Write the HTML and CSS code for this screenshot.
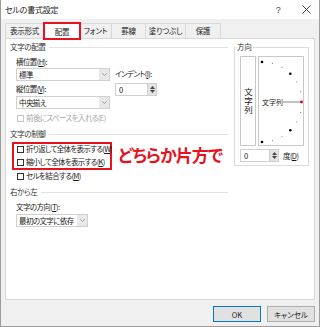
FILE: index.html
```html
<!DOCTYPE html>
<html lang="ja">
<head>
  <meta charset="UTF-8" />
  <title>セルの書式設定</title>
  <link rel="stylesheet" href="styles.css">
</head>
<body>
  <div class="window">
    <div class="titlebar">
      <span class="title">セルの書式設定</span>
      <span class="title-btn help">?</span>
      <span class="title-btn close">
        <svg width="9" height="9" viewBox="0 0 9 9"><path d="M0.5 0.5 L8.5 8.5 M8.5 0.5 L0.5 8.5" stroke="#333" stroke-width="0.9" fill="none"/></svg>
      </span>
    </div>

    <div class="tabs">
      <div class="tab tab-format">表示形式</div>
      <div class="tab active">配置</div>
      <div class="tab tab-font">フォント</div>
      <div class="tab tab-border">罫線</div>
      <div class="tab tab-fill">塗りつぶし</div>
      <div class="tab tab-protect">保護</div>
    </div>

    <div class="panel">
      <div class="left">
        <div class="group-title">文字の配置</div>
        <div class="align-fields">
          <div class="col-main">
            <div class="label">横位置(<u>H</u>):</div>
            <div class="select">
              <span class="select-text">標準</span>
              <span class="select-arrow"><svg width="5" height="3" viewBox="0 0 5 3"><path d="M0.3 0.3 L2.5 2.5 L4.7 0.3" stroke="#8a8a8a" stroke-width="0.8" fill="none"/></svg></span>
            </div>
            <div class="label label-v">縦位置(<u>V</u>):</div>
            <div class="select select-v">
              <span class="select-text">中央揃え</span>
              <span class="select-arrow"><svg width="5" height="3" viewBox="0 0 5 3"><path d="M0.3 0.3 L2.5 2.5 L4.7 0.3" stroke="#8a8a8a" stroke-width="0.8" fill="none"/></svg></span>
            </div>
          </div>
          <div class="col-indent">
            <div class="label label-indent">インデント(<u>I</u>):</div>
            <div class="spinner">
              <span class="spin-value">0</span>
              <span class="spin-btns">
                <svg width="5" height="3" viewBox="0 0 5 3"><path d="M0 3 L2.5 0 L5 3 Z" fill="#444"/></svg>
                <svg width="5" height="3" viewBox="0 0 5 3"><path d="M0 0 L2.5 3 L5 0 Z" fill="#444"/></svg>
              </span>
            </div>
          </div>
        </div>
        <div class="check disabled space-check"><span class="box"></span>前後にスペースを入れる(E)</div>

        <div class="group-title control-title">文字の制御</div>
        <div class="control-row">
          <div class="highlight">
            <div class="check"><span class="box"></span>折り返して全体を表示する(<u>W</u>)</div>
            <div class="check shrink"><span class="box"></span>縮小して全体を表示する(<u>K</u>)</div>
          </div>
          <div class="note">どちらか片方で</div>
        </div>
        <div class="check merge"><span class="box"></span>セルを結合する(<u>M</u>)</div>

        <div class="group-title rtl-title">右から左</div>
        <div class="label label-dir">文字の方向(<u>T</u>):</div>
        <div class="select select-dir">
          <span class="select-text">最初の文字に依存</span>
          <span class="select-arrow"><svg width="5" height="3" viewBox="0 0 5 3"><path d="M0.3 0.3 L2.5 2.5 L4.7 0.3" stroke="#8a8a8a" stroke-width="0.8" fill="none"/></svg></span>
        </div>
      </div>

      <fieldset class="orient">
        <legend>方向</legend>
        <div class="orient-boxes">
          <div class="vert-box"><span class="vert-text">文字列</span></div>
          <div class="dial">
            <svg width="44" height="88" viewBox="0 0 44 88">
              <circle cx="3" cy="5" r="1.3" fill="#000"/>
              <circle cx="13.4" cy="6.4" r="0.6" fill="#888"/>
              <circle cx="23" cy="10.4" r="0.6" fill="#888"/>
              <circle cx="31.3" cy="16.7" r="1.3" fill="#000"/>
              <circle cx="37.6" cy="25" r="0.6" fill="#888"/>
              <circle cx="41.6" cy="34.6" r="0.6" fill="#888"/>
              <circle cx="41.6" cy="55.4" r="0.6" fill="#888"/>
              <circle cx="37.6" cy="65" r="0.6" fill="#888"/>
              <circle cx="31.3" cy="73.3" r="1.3" fill="#000"/>
              <circle cx="23" cy="79.6" r="0.6" fill="#888"/>
              <circle cx="13.4" cy="83.6" r="0.6" fill="#888"/>
              <circle cx="3" cy="85" r="1.3" fill="#000"/>
              <line x1="24" y1="45" x2="42" y2="45" stroke="#555" stroke-width="0.7"/>
              <circle cx="42.5" cy="45" r="1.4" fill="#d0021b"/>
              <text x="3" y="47.5" class="dial-text">文字列</text>
            </svg>
          </div>
        </div>
        <div class="degree-row">
          <div class="spinner spinner-deg">
            <span class="spin-value">0</span>
            <span class="spin-btns">
              <svg width="5" height="3" viewBox="0 0 5 3"><path d="M0 3 L2.5 0 L5 3 Z" fill="#444"/></svg>
              <svg width="5" height="3" viewBox="0 0 5 3"><path d="M0 0 L2.5 3 L5 0 Z" fill="#444"/></svg>
            </span>
          </div>
          <span class="degree-label">度(<u>D</u>)</span>
        </div>
      </fieldset>
    </div>

    <div class="footer">
      <button class="btn primary">OK</button>
      <button class="btn">キャンセル</button>
    </div>
  </div>
</body>
</html>
```

FILE: styles.css
```css
* {
  box-sizing: border-box;
  margin: 0;
  padding: 0;
}
body {
  font-family: "Noto Sans CJK JP", "Noto Sans", sans-serif;
  font-size: 7.5px;
  letter-spacing: -0.6px;
  color: #1a1a1a;
  font-feature-settings: "palt";
  background: #fff;
  white-space: nowrap;
}
u {
  text-decoration: underline;
  text-underline-offset: 1px;
}
.window {
  width: 320px;
  height: 327px;
  background: #f0f0f0;
  border: 1px solid #9c9c9c;
  border-top: none;
  display: flex;
  flex-direction: column;
}
.titlebar {
  height: 19px;
  background: #fff;
  display: flex;
  align-items: center;
  padding-left: 4px;
}
.title {
  flex: 1;
  font-size: 8px;
  letter-spacing: -0.2px;
  color: #222;
}
.title-btn {
  display: flex;
  align-items: center;
  justify-content: center;
  height: 19px;
  color: #444;
}
.help {
  width: 30px;
  font-family: "Liberation Sans", sans-serif;
  font-size: 9px;
}
.close {
  width: 26px;
}

/* tabs */
.tabs {
  display: flex;
  align-items: flex-start;
  height: 15px;
  margin-top: 4px;
  padding-left: 4px;
  position: relative;
  z-index: 1;
}
.tab {
  height: 15px;
  line-height: 14px;
  text-align: center;
  font-size: 7.5px;
  letter-spacing: -0.2px;
  color: #222;
  background: #f0f0f0;
  border: 1px solid #d9d9d9;
  border-bottom: none;
  margin-left: -1px;
}
.tab:first-child {
  margin-left: 0;
}
.tab-format { width: 39px; }
.tab-font { width: 33px; }
.tab-border { width: 35px; }
.tab-fill { width: 41px; }
.tab-protect { width: 36px; }
.tab.active {
  width: 38px;
  height: 18px;
  margin-top: -1px;
  margin-left: -1px;
  margin-right: -1px;
  line-height: 15px;
  background: #fff;
  border: 2px solid #e6121d;
  position: relative;
  z-index: 2;
}

/* main panel */
.panel {
  height: 262px;
  margin: 0 4px;
  background: #fff;
  border: 1px solid #d9d9d9;
  display: flex;
  align-items: flex-start;
  padding: 3px 0 0 4px;
}
.left {
  width: 218px;
}
.group-title {
  display: flex;
  align-items: center;
  height: 10px;
  line-height: 10px;
  letter-spacing: -0.3px;
  color: #333;
}
.group-title::after {
  content: "";
  flex: 1;
  border-top: 1px solid #e3e3e3;
  margin-left: 3px;
}
.label {
  height: 10px;
  line-height: 10px;
}
.align-fields {
  display: flex;
  margin-left: 6px;
  margin-top: 5px;
}
.col-main {
  width: 94px;
}
.col-indent {
  margin-left: 5px;
}
.label-indent {
  margin-top: 12px;
}
.label-v {
  margin-top: 3px;
}
.select {
  display: flex;
  align-items: stretch;
  height: 13px;
  margin-top: 1px;
  border: 1px solid #d0d0d0;
  background: #fff;
}
.select-v {
  margin-top: 2px;
}
.select-text {
  flex: 1;
  padding-left: 2px;
  line-height: 11px;
}
.select-arrow {
  width: 10px;
  flex-shrink: 0;
  display: flex;
  align-items: center;
  justify-content: center;
  background: #e8e8e8;
}
.spinner {
  display: flex;
  height: 13px;
  width: 42px;
  margin-top: 4px;
}
.spin-value {
  flex: 1;
  border: 1px solid #d0d0d0;
  background: #fff;
  padding-left: 3px;
  line-height: 11px;
}
.spin-btns {
  width: 9px;
  display: flex;
  flex-direction: column;
  align-items: center;
  justify-content: space-around;
  background: #e3e3e3;
  border: 1px solid #d0d0d0;
  border-left: none;
  padding: 1px 0;
}

/* checkboxes */
.check {
  display: flex;
  align-items: center;
  height: 10px;
  line-height: 10px;
  margin-left: 7px;
}
.box {
  flex-shrink: 0;
  width: 7px;
  height: 7px;
  border: 1px solid #333;
  background: #fff;
  margin-right: 2px;
}
.disabled {
  color: #a8a8a8;
}
.disabled .box {
  border-color: #c6c6c6;
}
.space-check {
  margin-top: 4px;
}
.control-title {
  margin-top: 6px;
}
.control-row {
  display: flex;
  align-items: center;
  margin-top: 3px;
}
.highlight {
  width: 100px;
  flex-shrink: 0;
  margin-left: 2px;
  border: 2px solid #e6121d;
  padding-bottom: 1px;
  letter-spacing: -0.7px;
}
.highlight .check {
  margin-left: 3px;
}
.highlight .shrink {
  margin-top: 3px;
}
.note {
  margin-left: 6px;
  margin-top: -3px;
  font-size: 17px;
  font-weight: 700;
  letter-spacing: -1px;
  color: #e6121d;
  line-height: 22px;
}
.merge {
  margin-top: 1px;
}
.rtl-title {
  margin-top: 6px;
}
.label-dir {
  margin-top: 5px;
  margin-left: 6px;
}
.select-dir {
  width: 72px;
  margin-left: 6px;
  margin-top: 2px;
}

/* orientation */
.orient {
  width: 75px;
  margin-left: 6px;
  border: 1px solid #dcdcdc;
  padding: 0 4px 3px 5px;
}
.orient legend {
  margin-left: -4px;
  padding: 0 1px;
  line-height: 10px;
  letter-spacing: -0.2px;
  color: #333;
}
.orient-boxes {
  display: flex;
  gap: 2px;
  margin-top: 4px;
}
.vert-box {
  width: 16px;
  height: 90px;
  border: 1px solid #c8c8c8;
  display: flex;
  align-items: center;
  justify-content: center;
}
.vert-text {
  writing-mode: vertical-rl;
  font-size: 8.5px;
  line-height: 9px;
  letter-spacing: 0.5px;
}
.dial {
  width: 46px;
  height: 90px;
  border: 1px solid #c8c8c8;
}
.dial svg {
  display: block;
}
.dial-text {
  font-size: 7px;
  letter-spacing: 0;
  fill: #1a1a1a;
}
.degree-row {
  display: flex;
  align-items: center;
  margin-top: 3px;
}
.spinner-deg {
  width: 39px;
  margin-top: 0;
}
.degree-label {
  margin-left: 4px;
}

/* footer */
.footer {
  display: flex;
  justify-content: flex-end;
  gap: 6px;
  padding: 6px 4px 0 0;
}
.btn {
  width: 48px;
  height: 16px;
  font-family: "Noto Sans CJK JP", sans-serif;
  font-feature-settings: "palt";
  font-size: 7.5px;
  color: #1a1a1a;
  background: #e1e1e1;
  border: 1px solid #adadad;
}
.btn.primary {
  border-color: #0078d7;
}
```
